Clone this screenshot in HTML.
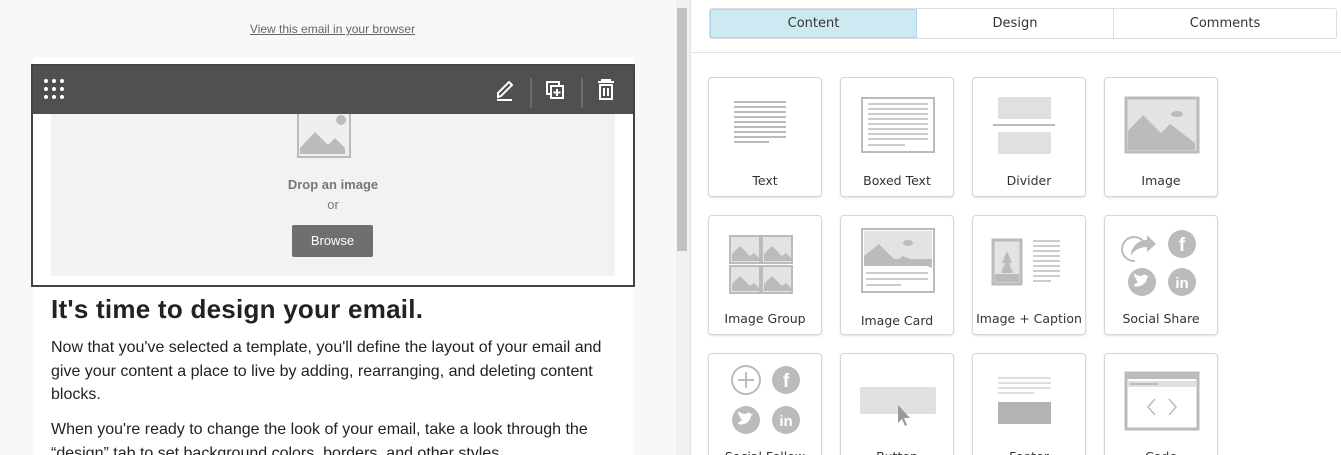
<!DOCTYPE html>
<html style="width:1341px;height:455px;overflow:hidden"><head><style>
*{margin:0;padding:0;box-sizing:border-box}
body{width:1341px;height:455px;overflow:hidden;background:#fff;font-family:"Liberation Sans",sans-serif;position:relative}
.abs{position:absolute}
.card{position:absolute;width:114px;height:120px;border:1px solid #d6d6d6;border-radius:4px;background:#fff;box-shadow:0 1px 2px rgba(0,0,0,.12)}
.card .lbl{position:absolute;left:0;right:0;top:95px;text-align:center;font-family:"DejaVu Sans",sans-serif;font-size:12.5px;color:#333}
.card svg{position:absolute;left:0;top:0}
</style></head><body>
<div class="abs" style="left:0;top:0;width:676px;height:455px;background:#f8f8f8"></div>
<div class="abs" style="left:0;top:22px;width:665px;text-align:center;font-size:12px;color:#666;text-decoration:underline">View this email in your browser</div>
<div class="abs" style="left:33px;top:57px;width:600px;height:398px;background:#fff"></div>
<div class="abs" style="left:51px;top:100px;width:564px;height:176px;background:#f2f2f2"></div>
<svg class="abs" style="left:296px;top:102px" width="74" height="58"><rect x="2" y="1" width="52" height="54" fill="#efefef" stroke="#bbb" stroke-width="2"/><path d="M4 52 L4 46 L19 30 L32 43 L39 36 L49 46 L49 52Z" fill="#bbb"/><circle cx="45" cy="18" r="5" fill="#bbb"/></svg>
<div class="abs" style="left:51px;top:177px;width:564px;text-align:center;font-size:13px;font-weight:bold;color:#777">Drop an image</div>
<div class="abs" style="left:51px;top:197px;width:564px;text-align:center;font-size:13px;color:#777">or</div>
<div class="abs" style="left:292px;top:225px;width:81px;height:32px;background:#6f6f6f;border-radius:2px;color:#fff;font-size:13px;text-align:center;line-height:32px">Browse</div>
<div class="abs" style="left:31px;top:64px;width:604px;height:223px;border:2px solid #444"></div>
<div class="abs" style="left:33px;top:66px;width:600px;height:48px;background:#505050"></div>
<svg class="abs" style="left:44px;top:79px" width="22" height="22" fill="#fff"><circle cx="2" cy="2" r="2"/><circle cx="10" cy="2" r="2"/><circle cx="18" cy="2" r="2"/><circle cx="2" cy="10" r="2"/><circle cx="10" cy="10" r="2"/><circle cx="18" cy="10" r="2"/><circle cx="2" cy="18" r="2"/><circle cx="10" cy="18" r="2"/><circle cx="18" cy="18" r="2"/></svg>
<svg class="abs" style="left:494px;top:78px" width="130" height="30" stroke="#fff" fill="none" stroke-width="2"><path d="M4 19 L4 15 L15 4 L18 7 L7 18Z"/><path d="M3 22 H18"/><line x1="37" y1="-6" x2="37" y2="30" stroke="#888" stroke-width="1"/><rect x="53" y="4" width="12" height="12"/><rect x="57" y="8" width="12" height="12" fill="#505050"/><path d="M63 11 v7 M59.5 14.5 h7"/><line x1="88" y1="-6" x2="88" y2="30" stroke="#888" stroke-width="1"/><path d="M104 4 h16 M108 4 v-2 h8 v2 M106 7 h12 v14 h-12z M110 10 v8 M114 10 v8"/></svg>
<div class="abs" style="left:51px;top:294px;font-size:26px;letter-spacing:0.25px;font-weight:bold;color:#222">It's time to design your email.</div>
<div class="abs" style="left:51px;top:336px;width:570px;font-size:16px;line-height:23.5px;color:#222">Now that you've selected a template, you'll define the layout of your email and give your content a place to live by adding, rearranging, and deleting content blocks.</div>
<div class="abs" style="left:51px;top:418px;width:570px;font-size:16px;line-height:23.5px;color:#222">When you're ready to change the look of your email, take a look through the “design” tab to set background colors, borders, and other styles.</div>
<div class="abs" style="left:676px;top:0;width:14px;height:455px;background:#f1f1f1"></div>
<div class="abs" style="left:677px;top:8px;width:10px;height:243px;background:#c1c1c1"></div>
<div class="abs" style="left:690px;top:0;width:1px;height:455px;background:#e2e2e2"></div>
<div class="abs" style="left:709px;top:8px;width:628px;height:31px;border:1px solid #ddd;border-radius:3px;font-family:'DejaVu Sans',sans-serif;font-size:13px;color:#333">
<div class="abs" style="left:0;top:0;width:207px;height:29px;background:#cdeaf3;border:1px solid #a9d9ea;text-align:center;line-height:27px">Content</div>
<div class="abs" style="left:207px;top:0;width:197px;height:29px;border-right:1px solid #ddd;text-align:center;line-height:29px">Design</div>
<div class="abs" style="left:404px;top:0;width:222px;height:29px;text-align:center;line-height:29px">Comments</div>
</div>
<div class="abs" style="left:691px;top:52px;width:650px;height:1px;background:#e2e2e2"></div>

<div class="card" style="left:708px;top:77px"><svg width="114" height="95"><g stroke="#bbb" stroke-width="2"><path d="M25 24h52M25 29h52M25 34h52M25 39h52M25 44h52M25 49h52M25 54h52M25 59h52M25 64h35"/></g></svg><div class="lbl">Text</div></div>
<div class="card" style="left:840px;top:77px"><svg width="114" height="95"><rect x="21" y="20" width="72" height="54" fill="none" stroke="#bbb" stroke-width="2"/><g stroke="#ccc" stroke-width="2"><path d="M27 26h60M27 31h60M27 36h60M27 41h60M27 46h60M27 51h60M27 56h60M27 61h60M27 67h37"/></g></svg><div class="lbl">Boxed Text</div></div>
<div class="card" style="left:972px;top:77px"><svg width="114" height="95"><rect x="25" y="19" width="53" height="22" fill="#e0e0e0"/><rect x="20" y="46" width="62" height="2" fill="#bbb"/><rect x="25" y="54" width="53" height="22" fill="#e0e0e0"/></svg><div class="lbl">Divider</div></div>
<div class="card" style="left:1104px;top:77px"><svg width="114" height="95"><rect x="21" y="20" width="72" height="54" fill="#e3e3e3" stroke="#bbb" stroke-width="3"/><path d="M23 72V53L38 37L56 55L65 46L90 65V72Z" fill="#bbb"/><ellipse cx="72" cy="36" rx="6" ry="3" fill="#bbb"/></svg><div class="lbl">Image</div></div>
<div class="card" style="left:708px;top:215px"><svg width="114" height="95"><g fill="#e3e3e3" stroke="#bbb" stroke-width="2"><rect x="21" y="20" width="30" height="27"/><rect x="53" y="20" width="30" height="27"/><rect x="21" y="50" width="30" height="27"/><rect x="53" y="50" width="30" height="27"/></g><g fill="#bbb"><path d="M23 45v-7l8-8 10 10 4-3 5 5v3z"/><path d="M55 45v-7l8-8 10 10 4-3 5 5v3z"/><path d="M23 75v-7l8-8 10 10 4-3 5 5v3z"/><path d="M55 75v-7l8-8 10 10 4-3 5 5v3z"/></g></svg><div class="lbl">Image Group</div></div>
<div class="card" style="left:840px;top:215px"><svg width="114" height="95"><rect x="21" y="13" width="72" height="63" fill="none" stroke="#bbb" stroke-width="2"/><rect x="23" y="15" width="68" height="35" fill="#e3e3e3"/><path d="M23 50V40L38 28L55 45L62 40L91 52V50Z" fill="#bbb"/><rect x="23" y="43" width="68" height="7" fill="#bbb"/><ellipse cx="67" cy="27" rx="5" ry="3" fill="#bbb"/><g stroke="#ccc" stroke-width="2"><path d="M25 57h62M25 63h62M25 69h35"/></g></svg><div class="lbl" style="top:97px">Image Card</div></div>
<div class="card" style="left:972px;top:215px"><svg width="114" height="95"><rect x="20" y="24" width="28" height="44" fill="#e3e3e3" stroke="#bbb" stroke-width="3"/><rect x="22" y="58" width="24" height="8" fill="#bbb"/><path d="M34 35l-5 12h3l-4 10h12l-4-10h3z" fill="#bbb"/><g stroke="#ccc" stroke-width="2"><path d="M60 25h27M60 30h27M60 35h27M60 40h27M60 45h27M60 50h27M60 55h27M60 60h27M60 65h18"/></g></svg><div class="lbl">Image + Caption</div></div>
<div class="card" style="left:1104px;top:215px"><svg width="114" height="95"><path d="M30 45a12 12 0 1 1 8-20" fill="none" stroke="#bbb" stroke-width="2"/><path d="M26 40c0-10 8-16 16-16v-5l9 9-9 8v-5c-8 0-14 4-16 9z" fill="#bbb"/><circle cx="77" cy="28" r="14" fill="#bbb"/><text x="77" y="35" text-anchor="middle" font-size="19" font-weight="bold" fill="#fff" font-family="Liberation Sans">f</text><circle cx="37" cy="66" r="14" fill="#bbb"/><path d="M29 70c6 2 12-2 13-8l2-2-2 0c-1-2-4-2-5 0-3 0-6-1-8-3 0 3 1 5 3 6-1 0-2 0-2-1 1 2 2 3 3 4-3 2-4 3-4 4z" fill="#fff"/><circle cx="77" cy="66" r="14" fill="#bbb"/><text x="77" y="72" text-anchor="middle" font-size="15" font-weight="bold" fill="#fff" font-family="Liberation Sans">in</text></svg><div class="lbl">Social Share</div></div>
<div class="card" style="left:708px;top:353px"><svg width="114" height="95"><circle cx="37" cy="26" r="14" fill="none" stroke="#bbb" stroke-width="2"/><path d="M37 18v16M29 26h16" stroke="#bbb" stroke-width="2"/><circle cx="77" cy="26" r="14" fill="#bbb"/><text x="77" y="33" text-anchor="middle" font-size="19" font-weight="bold" fill="#fff" font-family="Liberation Sans">f</text><circle cx="37" cy="66" r="14" fill="#bbb"/><path d="M29 70c6 2 12-2 13-8l2-2-2 0c-1-2-4-2-5 0-3 0-6-1-8-3 0 3 1 5 3 6-1 0-2 0-2-1 1 2 2 3 3 4-3 2-4 3-4 4z" fill="#fff"/><circle cx="77" cy="66" r="14" fill="#bbb"/><text x="77" y="72" text-anchor="middle" font-size="15" font-weight="bold" fill="#fff" font-family="Liberation Sans">in</text></svg><div class="lbl">Social Follow</div></div>
<div class="card" style="left:840px;top:353px"><svg width="114" height="95"><rect x="19" y="33" width="76" height="27" rx="2" fill="#e0e0e0"/><path d="M57 51v18l4-4 3 7 2-1-3-7h6z" fill="#999"/></svg><div class="lbl">Button</div></div>
<div class="card" style="left:972px;top:353px"><svg width="114" height="95"><g stroke="#ddd" stroke-width="2"><path d="M25 24h53M25 29h53M25 34h53M25 39h36"/></g><rect x="25" y="48" width="53" height="22" fill="#b3b3b3"/></svg><div class="lbl">Footer</div></div>
<div class="card" style="left:1104px;top:353px"><svg width="114" height="95"><rect x="21" y="19" width="72" height="56" fill="none" stroke="#bbb" stroke-width="3"/><rect x="21" y="19" width="72" height="6" fill="#bbb"/><rect x="23" y="27" width="68" height="6" fill="#e0e0e0"/><rect x="25" y="29" width="28" height="2" fill="#bbb"/><path d="M50 45l-7 8 7 8M64 45l7 8-7 8" fill="none" stroke="#bbb" stroke-width="1.5"/></svg><div class="lbl">Code</div></div>
</body></html>
